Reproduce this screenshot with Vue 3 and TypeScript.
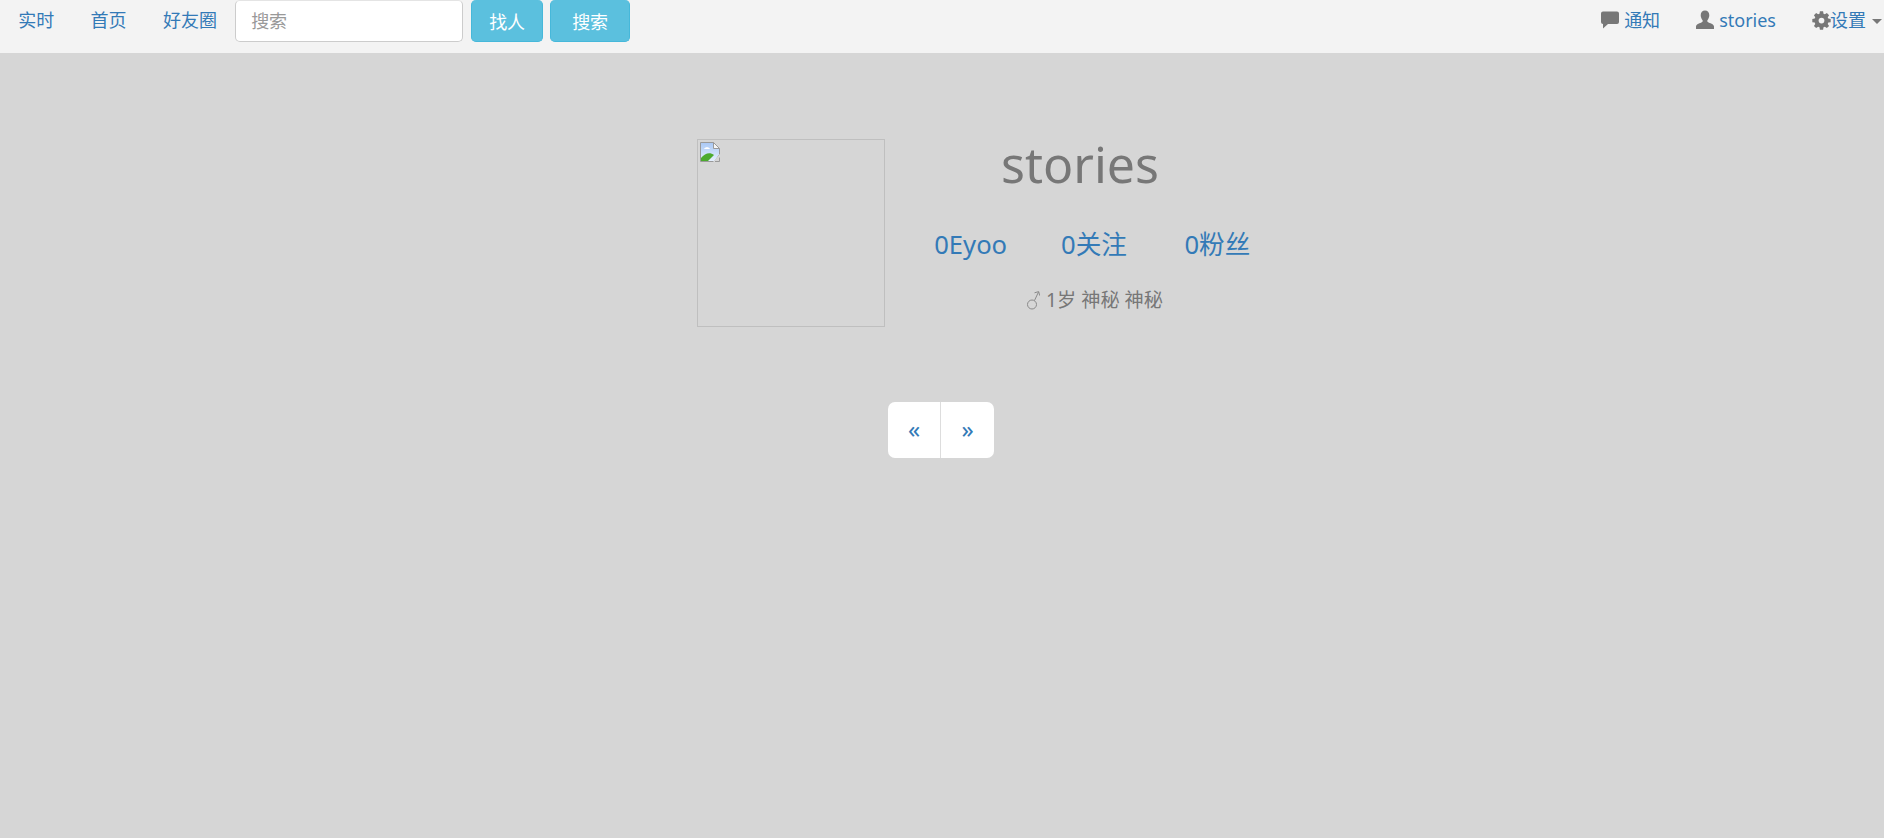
<template>
  <div class="page">
    <nav class="navbar">
      <div class="nav-left">
        <a v-for="item in leftLinks" :key="item" class="nav-link">{{ item }}</a>
        <form class="search" @submit.prevent>
          <input class="search-input" type="text" placeholder="搜索" />
          <button class="btn btn-people" type="button">找人</button>
          <button class="btn btn-search" type="button">搜索</button>
        </form>
      </div>
      <div class="nav-right">
        <a class="right-link notice">
          <svg class="icon" viewBox="0 0 20 20"><path d="M3 1.500h14a2 2 0 0 1 2 2v8.500a2 2 0 0 1-2 2H8l-5 4.500v-4.500a2 2 0 0 1-2-2V3.500a2 2 0 0 1 2-2z" /></svg>
          <span class="gap">通知</span>
        </a>
        <a class="right-link user">
          <svg class="icon" viewBox="0 0 20 20"><path d="M10 .5c2.600 0 4.300 2 4.300 4.700 0 1.900-.8 3.500-1.700 4.700-.5.700-.5 1.500.2 2 1.900 1.300 6.200 2 6.200 4.600v2.500H1v-2.500c0-2.600 4.300-3.300 6.200-4.600.7-.5.7-1.300.2-2-.9-1.200-1.700-2.800-1.700-4.700C5.700 2.500 7.400.5 10 .5z" /></svg>
          <span class="gap">stories</span>
        </a>
        <a class="right-link settings">
          <svg class="icon gear" viewBox="0 0 20 20"><path fill-rule="evenodd" d="M8 0h4l.5 3 1.700.7L16.700 2l2.800 2.800-1.700 2.500.7 1.700 3 .5v4l-3 .5-.7 1.700 1.700 2.500-2.800 2.800-2.500-1.700-1.700.7-.5 3H8l-.5-3-1.700-.7L3.300 21 .5 18.200l1.700-2.500-.7-1.700-3-.5v-4l3-.5.7-1.700L.5 4.800 3.300 2l2.500 1.700L7.500 3z" transform="translate(1.600 .9) scale(.84)" /><circle cx="10" cy="10.600" r="3" fill="#f3f3f3" /></svg>
          <span class="gear-label">设置</span>
          <i class="caret"></i>
        </a>
      </div>
    </nav>

    <main class="profile">
      <div class="avatar">
        <svg class="broken" viewBox="0 0 20 20">
          <defs>
            <linearGradient id="sky" x1="0" y1="0" x2="0" y2="1">
              <stop offset="0" stop-color="#a9c8f5" />
              <stop offset="1" stop-color="#e6f0fd" />
            </linearGradient>
          </defs>
          <path d="M.5.500h13l6 6v6l-5 7H.5z" fill="url(#sky)" stroke="#9a9a9a" />
          <path d="M13.500.500v6h6z" fill="#f6f6f6" stroke="#9a9a9a" />
          <path d="M4 7c1-2.500 5-2.500 6 0z" fill="#fff" />
          <path d="M1 19v-3c4-5 9-6 13-3l-6 6z" fill="#4caa2e" />
          <path d="M13 20l7-8v8z" fill="#d6d6d6" />
          <path d="M15 19.500h4.500v-4" fill="none" stroke="#9a9a9a" />
        </svg>
      </div>
      <div class="info">
        <h1 class="name">stories</h1>
        <div class="stats">
          <a v-for="s in stats" :key="s" class="stat">{{ s }}</a>
        </div>
        <p class="meta">
          <svg class="male" viewBox="0 0 13 19">
            <circle cx="5" cy="13.500" r="4.500" />
            <path d="M7.500 9.500 11.500 1M7.500 1.800l4.200-1.200 1 4" />
          </svg>
          <span>1岁 神秘 神秘</span>
        </p>
      </div>
    </main>

    <div class="pager">
      <a class="page-btn first">«</a>
      <a class="page-btn last">»</a>
    </div>
  </div>
</template>

<script setup lang="ts">
const leftLinks: string[] = ['实时', '首页', '好友圈']
const stats: string[] = ['0Eyoo', '0关注', '0粉丝']
</script>

<style scoped>
.page {
  font-family: "Noto Sans", "Noto Sans CJK SC", sans-serif;
  color: #777;
}

.navbar {
  display: flex;
  justify-content: space-between;
  height: 53px;
  background: #f3f3f3;
  font-size: 18px;
}

.nav-left,
.nav-right {
  display: flex;
  align-items: flex-start;
}

.nav-link {
  padding: 7px 18.2px;
  color: #337ab7;
  line-height: 26px;
}

.search {
  display: flex;
  gap: 7px;
}

.search-input {
  box-sizing: border-box;
  width: 228px;
  height: 42px;
  margin-right: 1px;
  padding: 0 15px;
  border: 1px solid #ccc;
  border-top-color: #e4e4e4;
  border-radius: 5px;
  background: #fff;
  font: inherit;
  outline: none;
}

.search-input::placeholder {
  color: #999;
}

.btn {
  box-sizing: border-box;
  height: 42px;
  border: 1px solid #46b8da;
  border-top: 0;
  border-radius: 5px;
  background: #5bc0de;
  color: #fff;
  font: inherit;
  padding: 0;
}

.btn-people {
  width: 72px;
}

.btn-search {
  width: 80px;
}

.nav-right {
  padding-top: 7px;
  line-height: 26px;
  color: #337ab7;
}

.right-link {
  display: flex;
  align-items: center;
}

.icon {
  width: 20px;
  height: 20px;
  fill: #777;
}

.gap {
  margin-left: 4px;
}

.notice {
  margin-right: 35px;
}

.user {
  margin-right: 36px;
}

.gear {
  width: 19px;
}

.gear-label {
  margin-left: -1px;
}

.caret {
  width: 0;
  height: 0;
  margin: 3px 2px 0 6px;
  border-top: 5px solid #777;
  border-left: 5px solid transparent;
  border-right: 5px solid transparent;
}

.profile {
  display: flex;
  padding: 86px 0 0 697px;
}

.avatar {
  box-sizing: border-box;
  width: 188px;
  height: 188px;
  padding: 2px;
  border: 1px solid #bfbfbf;
}

.broken {
  display: block;
  width: 20px;
  height: 20px;
}

.info {
  width: 370px;
  margin-left: 24px;
  text-align: center;
}

.name {
  margin: -5px 0 0;
  padding-right: 28px;
  font-size: 50px;
  font-weight: 400;
  line-height: 60px;
  color: #777;
}

.stats {
  display: grid;
  grid-template-columns: repeat(3, 1fr);
  margin-top: 34px;
  font-size: 25.600px;
  line-height: 34px;
  color: #337ab7;
}

.meta {
  display: flex;
  align-items: center;
  justify-content: center;
  gap: 6px;
  margin: 25px 0 0;
  padding-left: 2px;
  font-size: 19.200px;
  line-height: 26px;
}

.male {
  width: 13px;
  height: 19px;
  fill: none;
  stroke: #8a8a8a;
  stroke-width: 1;
}

.pager {
  display: flex;
  justify-content: center;
  margin-top: 75px;
  padding-right: 2px;
}

.page-btn {
  box-sizing: border-box;
  width: 53px;
  height: 56px;
  background: #fff;
  color: #337ab7;
  font-size: 24px;
  line-height: 54px;
  text-align: center;
}

.first {
  border-right: 1px solid #ddd;
  border-radius: 7px 0 0 7px;
}

.last {
  border-radius: 0 7px 7px 0;
}
</style>

<style>
html,
body {
  margin: 0;
  min-height: 100%;
  background: #d6d6d6;
}
</style>
